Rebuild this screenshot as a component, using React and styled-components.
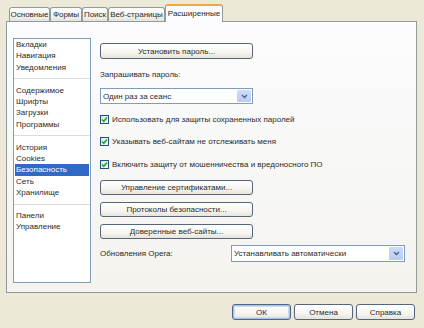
import styled, { createGlobalStyle } from 'styled-components';

const GlobalStyle = createGlobalStyle`
  html, body {
    margin: 0;
    padding: 0;
  }
  body {
    background: #ece9d8;
    font-family: 'Liberation Sans', Arial, sans-serif;
    font-size: 8px;
    color: #2a2a2a;
  }
`;

const Dialog = styled.div`
  width: 424px;
  height: 328px;
  box-sizing: border-box;
  padding: 4px 7px 0 6px;
  display: flex;
  flex-direction: column;
`;

const TabBar = styled.div`
  display: flex;
  align-items: flex-end;
  height: 17px;
  padding-left: 3px;
  position: relative;
  z-index: 1;
`;

const Tab = styled.div`
  box-sizing: border-box;
  width: ${({ $width }) => $width}px;
  height: ${({ $active }) => ($active ? 18 : 14)}px;
  margin-bottom: ${({ $active }) => ($active ? -1 : 0)}px;
  border: 1px solid #919b9c;
  border-bottom: none;
  border-top: ${({ $active }) => ($active ? '2px solid #f2a93b' : '1px solid #919b9c')};
  border-radius: 3px 3px 0 0;
  background: ${({ $active }) => ($active ? '#fcfcfe' : 'linear-gradient(#ffffff, #f0efea 70%, #e4e2da)')};
  display: flex;
  align-items: center;
  justify-content: center;
  padding-bottom: ${({ $active }) => ($active ? 2 : 0)}px;
  white-space: nowrap;
`;

const Panel = styled.div`
  box-sizing: border-box;
  height: 272px;
  border: 1px solid #919b9c;
  background: linear-gradient(#fcfcfe, #f4f3ee);
  display: flex;
  align-items: flex-start;
  padding: 16px 0 0 6px;
`;

const Sidebar = styled.div`
  box-sizing: border-box;
  width: 78px;
  height: 245px;
  border: 1px solid #7f9db9;
  background: #ffffff;
  display: flex;
  flex-direction: column;
`;

const Item = styled.div`
  height: 11.4px;
  line-height: 11.4px;
  margin: 0 1px;
  padding-left: 1px;
  white-space: nowrap;
  background: ${({ $selected }) => ($selected ? '#316ac5' : 'transparent')};
  color: ${({ $selected }) => ($selected ? '#ffffff' : 'inherit')};
`;

const Separator = styled.div`
  height: 11.4px;
  display: flex;
  align-items: center;
  &::after {
    content: '';
    flex: 1;
    height: 1px;
    background: #dcdcdc;
  }
`;

const Content = styled.div`
  margin-left: 9px;
  margin-top: 5px;
  display: flex;
  flex-direction: column;
  align-items: flex-start;
`;

const Button = styled.button`
  box-sizing: border-box;
  width: ${({ $width }) => $width}px;
  height: ${({ $height }) => $height}px;
  padding: 0;
  border: 1px solid #55657a;
  border-radius: 3px;
  background: linear-gradient(#ffffff, #f6f5f0 60%, #e6e3da);
  box-shadow: ${({ $default }) =>
    $default ? 'inset 0 0 0 1px #a8c2ec, inset 0 0 0 2px #cddcf5' : 'none'};
  font: inherit;
  color: inherit;
`;

const Label = styled.div`
  line-height: 11px;
  margin-top: 10px;
  white-space: nowrap;
`;

const Select = styled.div`
  box-sizing: border-box;
  width: ${({ $width }) => $width}px;
  height: ${({ $height }) => $height}px;
  border: 1px solid #7f9db9;
  background: #ffffff;
  display: flex;
  align-items: stretch;
  padding: 1px;
`;

const SelectText = styled.span`
  flex: 1;
  display: flex;
  align-items: center;
  padding-left: 1px;
  white-space: nowrap;
`;

const Arrow = styled.span`
  width: 14px;
  border-radius: 1px;
  background: linear-gradient(#cfdbfb, #b9cbf5);
  display: flex;
  align-items: center;
  justify-content: center;
`;

const FirstSelect = styled.div`
  margin-top: 8px;
`;

const Checks = styled.div`
  margin-top: 9px;
  display: flex;
  flex-direction: column;
  gap: 10.5px;
`;

const CheckRow = styled.label`
  display: flex;
  align-items: center;
  gap: 3px;
  height: 12px;
  white-space: nowrap;
`;

const Box = styled.span`
  box-sizing: border-box;
  width: 9px;
  height: 9px;
  border: 1px solid #1c5180;
  background: linear-gradient(135deg, #e0e0da, #ffffff);
  display: flex;
  align-items: center;
  justify-content: center;
`;

const ButtonStack = styled.div`
  margin-top: 10px;
  display: flex;
  flex-direction: column;
  gap: 7px;
`;

const UpdateRow = styled.div`
  margin-top: 6px;
  display: flex;
  align-items: center;
`;

const UpdateLabel = styled.span`
  width: 131px;
  white-space: nowrap;
`;

const Footer = styled.div`
  display: flex;
  justify-content: flex-end;
  gap: 3px;
  padding: 11px 2px 0 0;
`;

const tabs = [
  { label: 'Основные', width: 41 },
  { label: 'Формы', width: 32 },
  { label: 'Поиск', width: 26 },
  { label: 'Веб-страницы', width: 57 },
  { label: 'Расширенные', width: 58, active: true },
];

const sections = [
  ['Вкладки', 'Навигация', 'Уведомления'],
  ['Содержимое', 'Шрифты', 'Загрузки', 'Программы'],
  ['История', 'Cookies', 'Безопасность', 'Сеть', 'Хранилище'],
  ['Панели', 'Управление'],
];

const checks = [
  'Использовать для защиты сохраненных паролей',
  'Указывать веб-сайтам не отслеживать меня',
  'Включить защиту от мошенничества и вредоносного ПО',
];

function Chevron() {
  return (
    <svg width="7" height="5" viewBox="0 0 7 5">
      <path d="M1 1 L3.5 3.5 L6 1" fill="none" stroke="#4d6185" strokeWidth="1.4" />
    </svg>
  );
}

function Check() {
  return (
    <svg width="7" height="7" viewBox="0 0 7 7">
      <path d="M1 3.5 L2.8 5.3 L6 1.5" fill="none" stroke="#21a121" strokeWidth="1.5" />
    </svg>
  );
}

function Dropdown({ width, height, value }) {
  return (
    <Select $width={width} $height={height}>
      <SelectText>{value}</SelectText>
      <Arrow>
        <Chevron />
      </Arrow>
    </Select>
  );
}

export default function App() {
  return (
    <>
      <GlobalStyle />
      <Dialog>
        <TabBar>
          {tabs.map((tab) => (
            <Tab key={tab.label} $width={tab.width} $active={tab.active}>
              {tab.label}
            </Tab>
          ))}
        </TabBar>
        <Panel>
          <Sidebar>
            {sections.map((group, index) => (
              <div key={index}>
                {index > 0 && <Separator />}
                {group.map((name) => (
                  <Item key={name} $selected={name === 'Безопасность'}>
                    {name}
                  </Item>
                ))}
              </div>
            ))}
          </Sidebar>
          <Content>
            <Button $width={153} $height={16}>
              Установить пароль...
            </Button>
            <Label>Запрашивать пароль:</Label>
            <FirstSelect>
              <Dropdown width={153} height={16} value="Один раз за сеанс" />
            </FirstSelect>
            <Checks>
              {checks.map((text) => (
                <CheckRow key={text}>
                  <Box>
                    <Check />
                  </Box>
                  {text}
                </CheckRow>
              ))}
            </Checks>
            <ButtonStack>
              <Button $width={153} $height={15}>
                Управление сертификатами...
              </Button>
              <Button $width={153} $height={15}>
                Протоколы безопасности...
              </Button>
              <Button $width={153} $height={15}>
                Доверенные веб-сайты...
              </Button>
            </ButtonStack>
            <UpdateRow>
              <UpdateLabel>Обновления Opera:</UpdateLabel>
              <Dropdown width={174} height={17} value="Устанавливать автоматически" />
            </UpdateRow>
          </Content>
        </Panel>
        <Footer>
          <Button $width={59} $height={16} $default>
            ОК
          </Button>
          <Button $width={59} $height={16}>
            Отмена
          </Button>
          <Button $width={59} $height={16}>
            Справка
          </Button>
        </Footer>
      </Dialog>
    </>
  );
}
